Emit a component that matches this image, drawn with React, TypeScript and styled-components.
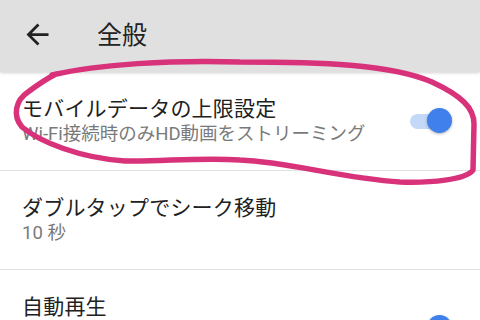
import React from "react";
import styled, { createGlobalStyle } from "styled-components";

const Global = createGlobalStyle`
  html, body { margin: 0; padding: 0; background: #ffffff; }
  body { width: 480px; height: 320px; overflow: hidden; font-family: Roboto, "Noto Sans CJK JP", sans-serif; }
  * { box-sizing: border-box; }
`;

const Screen = styled.div`
  position: relative;
  width: 480px;
  height: 320px;
  overflow: hidden;
  background: #ffffff;
`;

const AppBar = styled.header`
  display: flex;
  align-items: center;
  height: 72px;
  background: #e0e0e0;
  box-shadow: 0 1px 3px rgba(0, 0, 0, 0.18);
  position: relative;
  z-index: 1;
`;

const BackButton = styled.div`
  width: 33px;
  height: 33px;
  margin-left: 21px;
  margin-top: -3px;
  display: flex;
  color: #212121;
`;

const Title = styled.h1`
  margin: -2px 0 0 43px;
  font-size: 25px;
  font-weight: 400;
  color: #222222;
  line-height: 1;
`;

const List = styled.div`
  display: flex;
  flex-direction: column;
`;

const Row = styled.div<{ $minH?: number }>`
  display: flex;
  align-items: center;
  padding: 24px 27px 24px 22px;
  min-height: ${(p) => p.$minH ?? 0}px;
  border-bottom: 1px solid #e2e2e2;
`;

const Texts = styled.div<{ $top?: boolean }>`
  flex: 1;
  display: flex;
  flex-direction: column;
  align-self: ${(p) => (p.$top ? "flex-start" : "auto")};
`;

const Primary = styled.div`
  font-size: 21px;
  line-height: 26px;
  color: #212121;
  letter-spacing: 0.2px;
`;

const Secondary = styled.div`
  font-size: 18.5px;
  line-height: 24px;
  color: #7a7a7a;
`;

const SwitchWrap = styled.div`
  position: relative;
  width: 44px;
  height: 26px;
  display: flex;
  align-items: center;
`;

const Track = styled.div`
  width: 36px;
  height: 15px;
  margin-left: 1px;
  border-radius: 8px;
  background: #c4d8f8;
`;

const Thumb = styled.div`
  position: absolute;
  right: 1px;
  top: 0;
  width: 25px;
  height: 25px;
  border-radius: 50%;
  background: #3f80ec;
  box-shadow: 0 1px 3px rgba(0, 0, 0, 0.3);
`;

const Annotation = styled.svg`
  position: absolute;
  left: 0;
  top: 0;
  pointer-events: none;
  z-index: 2;
`;

const Switch = () => (
  <SwitchWrap>
    <Track />
    <Thumb />
  </SwitchWrap>
);

export default function App() {
  return (
    <>
      <Global />
      <Screen>
        <AppBar>
          <BackButton>
            <svg viewBox="0 0 24 24" width="33" height="33" fill="currentColor">
              <path d="M20 11H7.83l5.59-5.59L12 4l-8 8 8 8 1.41-1.41L7.83 13H20v-2z" />
            </svg>
          </BackButton>
          <Title>全般</Title>
        </AppBar>
        <List>
          <Row>
            <Texts>
              <Primary>モバイルデータの上限設定</Primary>
              <Secondary>Wi-Fi接続時のみHD動画をストリーミング</Secondary>
            </Texts>
            <Switch />
          </Row>
          <Row>
            <Texts>
              <Primary>ダブルタップでシーク移動</Primary>
              <Secondary>10 秒</Secondary>
            </Texts>
          </Row>
          <Row $minH={116}>
            <Texts $top>
              <Primary>自動再生</Primary>
            </Texts>
            <Switch />
          </Row>
        </List>
        <Annotation width="480" height="320" viewBox="0 0 480 320">
          <path
            d="M 52 75 C 100 64, 170 60, 240 62 C 320 62, 390 64, 432 82 C 462 96, 474 108, 474 124 L 473 170 C 466 180, 430 183, 400 182 C 340 178, 290 162, 240 160 C 200 157, 160 162, 125 161 C 80 158, 40 142, 22 127 C 12 115, 16 100, 28 92 C 36 86, 44 80, 56 74"
            fill="none"
            stroke="#d8327a"
            strokeWidth="5.5"
            strokeLinecap="round"
            strokeLinejoin="round"
          />
        </Annotation>
      </Screen>
    </>
  );
}
